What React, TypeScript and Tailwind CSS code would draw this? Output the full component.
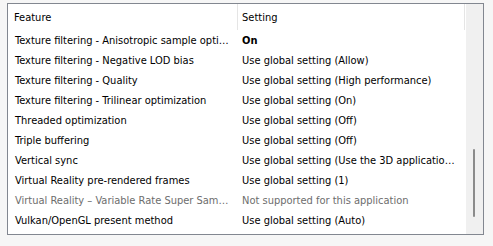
import React from 'react'

type Row = { feature: string; setting: string; bold?: boolean; disabled?: boolean }

const rows: Row[] = [
  { feature: 'Texture filtering - Anisotropic sample optimization', setting: 'On', bold: true },
  { feature: 'Texture filtering - Negative LOD bias', setting: 'Use global setting (Allow)' },
  { feature: 'Texture filtering - Quality', setting: 'Use global setting (High performance)' },
  { feature: 'Texture filtering - Trilinear optimization', setting: 'Use global setting (On)' },
  { feature: 'Threaded optimization', setting: 'Use global setting (Off)' },
  { feature: 'Triple buffering', setting: 'Use global setting (Off)' },
  { feature: 'Vertical sync', setting: 'Use global setting (Use the 3D application setting)' },
  { feature: 'Virtual Reality pre-rendered frames', setting: 'Use global setting (1)' },
  {
    feature: 'Virtual Reality – Variable Rate Super Sampling',
    setting: 'Not supported for this application',
    disabled: true,
  },
  { feature: 'Vulkan/OpenGL present method', setting: 'Use global setting (Auto)' },
]

export default function App() {
  return (
    <div
      className="w-[493px] h-[246px] bg-[#f6f6f6] pt-[3px] pl-[7px] text-[11px] leading-none"
      style={{ fontFamily: '"DejaVu Sans Condensed", "DejaVu Sans", sans-serif' }}
    >
      <div className="w-[477px] h-[232px] border border-[#828790] bg-white flex">
        {/* list */}
        <div className="flex-1 flex flex-col">
          {/* header */}
          <div className="h-[26px] flex items-center text-black">
            <div className="w-[229px] h-full flex items-center pl-[6px]">Feature</div>
            <div className="w-px h-full bg-[#e5e5e5]" />
            <div className="w-[226px] h-full flex items-center pl-[4px]">Setting</div>
            <div className="w-px h-full bg-[#e5e5e5]" />
          </div>
          {rows.map((r) => (
            <div
              key={r.feature}
              className={`h-[20px] flex items-center ${r.disabled ? 'text-[#6d6d6d]' : 'text-black'}`}
            >
              <div className="w-[229px] pl-[7px] pr-[7px] truncate">{r.feature}</div>
              <div className="w-px" />
              <div className={`w-[226px] pl-[4px] pr-[6px] truncate ${r.bold ? 'font-bold' : ''}`}>
                {r.setting}
              </div>
            </div>
          ))}
        </div>
        {/* scrollbar */}
        <div className="w-[17px] h-full bg-[#f0f0f0] flex flex-col">
          <div className="h-[145px]" />
          <div className="ml-[7px] w-[2px] h-[68px] bg-[#8b8b8b] rounded-full" />
        </div>
      </div>
    </div>
  )
}
